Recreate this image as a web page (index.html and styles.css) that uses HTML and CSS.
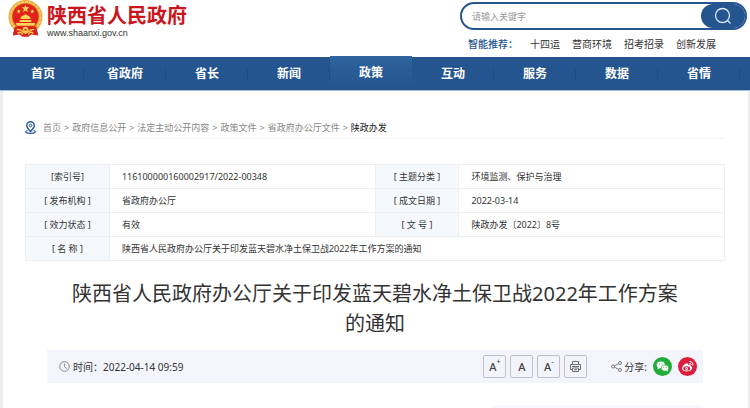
FILE: index.html
```html
<!DOCTYPE html>
<html lang="zh-CN">
<head>
    <meta charset="UTF-8">
    <meta name="viewport" content="width=device-width, initial-scale=1.0">
    <title>陕西省人民政府</title>
    <link rel="stylesheet" href="styles.css">
</head>
<body>
    <header class="header">
        <a class="logo" href="#">
            <svg class="emblem" viewBox="0 0 36 38" aria-hidden="true">
                <path fill="#d8211d" d="M8 27h20l3 9-7-1-3 2h-6l-3-2-7 1z"/>
                <circle cx="18" cy="17" r="17.500" fill="#e9a63a"/>
                <circle cx="18" cy="17" r="15.500" fill="none" stroke="#f6cf63" stroke-width="2" stroke-dasharray="3 1"/>
                <circle cx="18" cy="16.500" r="13.500" fill="#e2231c"/>
                <path fill="#fbd558" d="M18 4l1 3h3l-2.400 2 1 3-2.600-1.800-2.600 1.800 1-3-2.400-2h3zM11 9l.6 1.300 1.400.2-1 1 .2 1.500-1.200-.8-1.200.8.2-1.500-1-1 1.400-.2zM25 9l.6 1.300 1.400.2-1 1 .2 1.500-1.200-.8-1.200.8.200-1.500-1-1 1.400-.2zM13 17l5-3 5 3v2h-10zM12 20h12v2h-12zM8 23h20l-1 3h-18z"/>
                <path fill="#d8211d" d="M7 27q5-1 8 2l3 2 3-2q3-3 8-2l2 8-7-1-3 3h-6l-3-3-7 1z"/>
                <path fill="none" stroke="#f6c64c" stroke-width="1.500" d="M9 30q4-1 6 2t6 0 6-2M10 34q3-3 5 1M26 34q-3-3-5 1"/>
                <circle cx="18" cy="30" r="3" fill="#f6c64c"/>
                <circle cx="18" cy="30" r="1" fill="#d8211d"/>
            </svg>
            <span class="logo-text">
                <strong class="site-name">陕西省人民政府</strong>
                <span class="site-url">www.shaanxi.gov.cn</span>
            </span>
        </a>
        <div class="search-area">
            <form class="search">
                <input class="search-input" type="text" aria-label="搜索" placeholder="请输入关键字">
                <button class="search-btn" type="submit" aria-label="搜索">
                    <svg width="18" height="18" viewBox="0 0 18 18" fill="none" stroke="#dce9f7" stroke-width="1.300">
                        <circle cx="8.500" cy="8.500" r="7"/>
                        <path d="M13.500 13.500l3 3"/>
                    </svg>
                </button>
            </form>
            <div class="hot">
                <span class="hot-label">智能推荐：</span>
                <a href="#">十四运</a>
                <a href="#">营商环境</a>
                <a href="#">招考招录</a>
                <a href="#">创新发展</a>
            </div>
        </div>
    </header>

    <nav class="nav">
        <a href="#">首页</a>
        <a href="#">省政府</a>
        <a href="#">省长</a>
        <a href="#">新闻</a>
        <a class="active" href="#">政策</a>
        <a href="#">互动</a>
        <a href="#">服务</a>
        <a href="#">数据</a>
        <a href="#">省情</a>
    </nav>

    <main class="page">
        <div class="crumbs">
            <svg class="pin" width="11" height="13" viewBox="0 0 11 13" fill="none" stroke="#2a5c9c">
                <path stroke-width="1.500" d="M5.500 10.500C3 8 1.700 6.300 1.700 4.500a3.800 3.800 0 0 1 7.600 0c0 1.800-1.300 3.500-3.800 6z"/>
                <circle cx="5.500" cy="4.500" r="1.400"/>
                <path stroke-width="1.200" d="M2.500 9.500c-3 1 -2 2.800 3 2.800s6-1.800 3-2.800"/>
            </svg>
            <a href="#">首页</a><span>&gt;</span>
            <a href="#">政府信息公开</a><span>&gt;</span>
            <a href="#">法定主动公开内容</a><span>&gt;</span>
            <a href="#">政策文件</a><span>&gt;</span>
            <a href="#">省政府办公厅文件</a><span>&gt;</span>
            <a class="current" href="#">陕政办发</a>
        </div>

        <table class="info">
            <tr>
                <th>[索引号]</th>
                <td>116100000160002917/2022-00348</td>
                <th>[ 主题分类 ]</th>
                <td>环境监测、保护与治理</td>
            </tr>
            <tr>
                <th>[ 发布机构 ]</th>
                <td>省政府办公厅</td>
                <th>[ 成文日期 ]</th>
                <td>2022-03-14</td>
            </tr>
            <tr>
                <th>[ 效力状态 ]</th>
                <td>有效</td>
                <th>[ 文 号 ]</th>
                <td>陕政办发〔2022〕8号</td>
            </tr>
            <tr>
                <th>[ 名 称 ]</th>
                <td colspan="3">陕西省人民政府办公厅关于印发蓝天碧水净土保卫战2022年工作方案的通知</td>
            </tr>
        </table>

        <article class="article">
            <h1 class="title">陕西省人民政府办公厅关于印发蓝天碧水净土保卫战2022年工作方案的通知</h1>
            <div class="toolbar">
                <svg class="clock" width="11" height="11" viewBox="0 0 11 11" fill="none" stroke="#8a8c94">
                    <circle cx="5.500" cy="5.500" r="4.800"/>
                    <path d="M5.500 2.500v3.200l2.300 2"/>
                </svg>
                <span class="time">时间：2022-04-14 09:59</span>
                <div class="tools">
                    <button type="button">A<sup>+</sup></button>
                    <button type="button">A</button>
                    <button type="button">A<sup>-</sup></button>
                    <button type="button" aria-label="打印">
                        <svg width="11" height="11" viewBox="0 0 11 11" fill="none" stroke="#6d6f76">
                            <path d="M2.500 3V.5h6V3M2.500 8.500h-2v-5h10v5h-2M2 5.500h7M2.500 7h6v3.500h-6zM4 8.800h3"/>
                        </svg>
                    </button>
                </div>
                <div class="share">
                    <svg width="11" height="11" viewBox="0 0 11 11" fill="none" stroke="#777982">
                        <circle cx="2" cy="5.500" r="1.500"/>
                        <circle cx="9" cy="2" r="1.500"/>
                        <circle cx="9" cy="9" r="1.500"/>
                        <path d="M3.500 4.800L7.600 2.700M3.500 6.200l4.100 2.100"/>
                    </svg>
                    <span>分享:</span>
                    <a class="wechat" href="#" aria-label="微信">
                        <svg width="19" height="19" viewBox="0 0 19 19">
                            <circle cx="9.500" cy="9.500" r="9.500" fill="#22ad38"/>
                            <ellipse cx="7.800" cy="7.900" rx="4.100" ry="3.400" fill="#fff"/>
                            <path fill="#fff" d="M5 10l-.6 2.500 2.600-1.400z"/>
                            <ellipse cx="12" cy="11" rx="3.700" ry="3.100" fill="#fff" stroke="#22ad38" stroke-width=".6"/>
                            <path fill="#fff" d="M13 13.500l1.800 1-.4-2z"/>
                            <g fill="#22ad38">
                                <circle cx="6.400" cy="7" r=".6"/>
                                <circle cx="9.200" cy="7" r=".6"/>
                                <circle cx="10.800" cy="10.300" r=".5"/>
                                <circle cx="13.200" cy="10.300" r=".5"/>
                            </g>
                        </svg>
                    </a>
                    <a class="weibo" href="#" aria-label="微博">
                        <svg width="19" height="19" viewBox="0 0 19 19">
                            <circle cx="9.500" cy="9.500" r="9.500" fill="#dc1e3e"/>
                            <path fill="#fff" d="M4 11.500c0-2 3-5.200 5-5.200 1 0 1.200.8 1 1.600 1.800-.8 3.200-.3 2.600 1.300 1 .3 1.600 1 1.600 1.900 0 1.800-2.400 3.400-5.200 3.400S4 13.300 4 11.500z"/>
                            <ellipse cx="8.700" cy="11.400" rx="3.400" ry="2.200" fill="#dc1e3e"/>
                            <circle cx="8.500" cy="11.500" r="1.500" fill="#fff"/>
                            <circle cx="8.300" cy="11.700" r=".6" fill="#dc1e3e"/>
                            <path fill="none" stroke="#fff" d="M11.300 4.600c2.500-.4 4.200 1.600 3.500 3.900M11.500 6.500c1.200-.1 1.800.6 1.500 1.600"/>
                        </svg>
                    </a>
                </div>
            </div>
            <div class="panel"></div>
        </article>
    </main>
</body>
</html>
```

FILE: styles.css
```css
* {
    box-sizing: border-box;
}
body {
    margin: 0;
    font-family: "Noto Sans", "Noto Sans CJK SC", sans-serif;
    font-size: 9px;
    color: #333;
    background-color: #fff;
    overflow: hidden;
}
a {
    color: inherit;
    text-decoration: none;
}
svg {
    display: block;
    flex-shrink: 0;
}
button {
    cursor: pointer;
}

/* header */
.header {
    display: flex;
    justify-content: space-between;
    height: 57px;
    padding: 0 3px 0 8px;
}
.logo {
    display: flex;
    align-items: flex-start;
    gap: 4px;
}
.emblem {
    width: 35px;
    height: 38px;
}
.logo-text {
    display: flex;
    flex-direction: column;
    padding-top: 3px;
}
.site-name {
    font-family: "Noto Sans CJK SC", sans-serif;
    font-size: 20px;
    line-height: 24px;
    color: #c9161d;
}
.site-url {
    font-family: "Liberation Sans", sans-serif;
    font-size: 9px;
    line-height: 12px;
}
.search-area {
    width: 287px;
    padding-top: 2px;
}
.search {
    display: flex;
    height: 28px;
    border: 2px solid #24558f;
    border-radius: 14px;
    padding: 0 0 0 10px;
}
.search-input {
    flex: 1;
    min-width: 0;
    padding: 0;
    border: none;
    outline: none;
    background: none;
    font-family: inherit;
    font-size: 9px;
}
.search-input::placeholder {
    color: #999;
}
.search-btn {
    display: flex;
    align-items: center;
    justify-content: center;
    width: 44px;
    padding: 0;
    border: none;
    border-radius: 12px;
    background-color: #24558f;
}
.hot {
    display: flex;
    gap: 12px;
    padding: 6px 8px;
    font-size: 10px;
    line-height: 16px;
}
.hot-label {
    color: #24558f;
    font-weight: 500;
}

/* main navigation */
.nav {
    display: flex;
    height: 33px;
    padding: 0 10px 0 2px;
    background-color: #24558f;
    box-shadow: 0 1px 0 #a9bfd8;
}
.nav a {
    flex: 1;
    text-align: center;
    font-size: 12px;
    line-height: 34px;
    font-weight: bold;
    color: #fff;
    background: linear-gradient(#1f4c83, #1f4c83) right center / 1px 12px no-repeat;
}
.nav .active {
    height: 30px;
    margin-top: -1px;
    background: linear-gradient(#2f649f, #24558f);
}

/* content */
.page {
    margin-top: 1px;
    padding: 27px 23px 0 22px;
    border: solid #eee;
    border-width: 0 2px 0 3px;
}
.crumbs {
    display: flex;
    align-items: center;
    gap: 3px;
    height: 21px;
    padding-bottom: 2px;
    border-bottom: 1px solid #f4f4f4;
    color: #888;
}
.pin {
    margin-right: 4px;
}
.crumbs .current {
    color: #222;
}
.info {
    width: 100%;
    margin-top: 25px;
    border-collapse: collapse;
    table-layout: fixed;
}
.info th,
.info td {
    height: 24px;
    padding: 0;
    border: 1px solid #eee;
    line-height: 14px;
}
.info th {
    width: 12%;
    background-color: #f5f9fd;
    font-weight: normal;
    text-align: center;
}
.info td {
    padding-left: 12px;
}
.article {
    padding: 0 22px;
}
.title {
    margin: 18px 0 11px;
    padding: 0 20px;
    font-size: 20px;
    line-height: 30px;
    font-weight: normal;
    text-align: center;
    word-break: break-all;
}
.toolbar {
    display: flex;
    align-items: center;
    height: 33px;
    padding: 0 6px 0 12px;
    background-color: #f4f5fc;
    font-size: 10px;
}
.time {
    flex: 1;
    padding-left: 3px;
}
.tools {
    display: flex;
    gap: 4px;
    margin-right: 24px;
}
.tools button {
    display: flex;
    align-items: center;
    justify-content: center;
    width: 23px;
    height: 23px;
    padding: 0;
    border: 1px solid #bfc1c9;
    border-radius: 2px;
    background: none;
    font-family: inherit;
    font-size: 11px;
    font-weight: 500;
    color: #444;
}
.tools sup {
    align-self: flex-start;
    font-size: 7px;
    line-height: 11px;
}
.share {
    display: flex;
    align-items: center;
    gap: 2px;
}
.wechat {
    margin-left: 4px;
}
.weibo {
    margin-left: 4px;
}
.panel {
    width: 211px;
    height: 20px;
    margin: 22px 0 0 auto;
    background-color: #f7f8fc;
}
```
